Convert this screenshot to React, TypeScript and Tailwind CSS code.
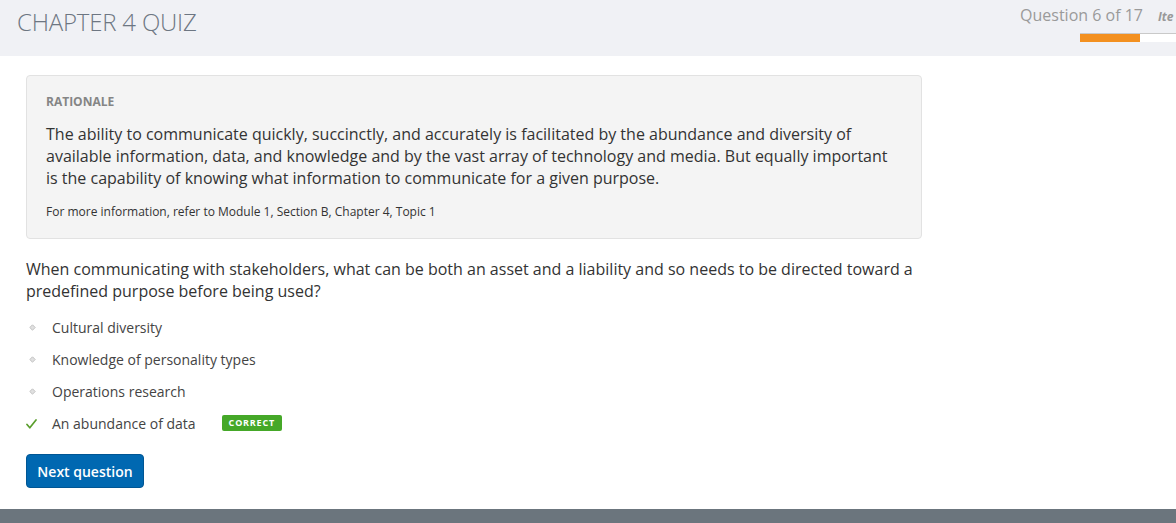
import React from 'react';

const options = [
  { label: 'Cultural diversity', correct: false },
  { label: 'Knowledge of personality types', correct: false },
  { label: 'Operations research', correct: false },
  { label: 'An abundance of data', correct: true },
];

const Diamond: React.FC = () => (
  <svg width="7" height="7" viewBox="0 0 7 7" className="block">
    <path d="M3.5 0.8 L6.2 3.5 L3.5 6.2 L0.8 3.5 Z" fill="#e0e0e0" stroke="#c2c2c2" strokeWidth="1" />
  </svg>
);

const Check: React.FC = () => (
  <svg width="11" height="10" viewBox="0 0 11 10" className="block">
    <path d="M1 5.5 L3.8 8.8 L10 1" fill="none" stroke="#5a9e2c" strokeWidth="1.7" strokeLinecap="round" strokeLinejoin="round" />
  </svg>
);

const App: React.FC = () => {
  return (
    <div className="w-[1176px] h-[523px] overflow-hidden bg-white flex flex-col" style={{ fontFamily: '"Open Sans", "Noto Sans", sans-serif' }}>
      {/* Header */}
      <div className="h-[56px] shrink-0 bg-[#f0f1f5] flex justify-between">
        <h1 className="pl-[17px] pt-[6px] text-[24px] leading-[32px] font-light text-[#6d7682] tracking-[-0.2px]">CHAPTER 4 QUIZ</h1>
        <div className="flex flex-col items-start pt-[4px] w-[96px] overflow-visible relative -ml-[100px]">
          <div className="absolute right-[33px] top-[4px] whitespace-nowrap text-[16px] leading-[22px] text-[#9a9a9a]">Question 6 of 17</div>
          <div className="absolute left-[78px] top-[8px] whitespace-nowrap text-[12px] font-bold italic text-[#999]">Ite</div>
          <div className="absolute left-[0px] top-[33px] w-[120px] h-[9px] bg-white border-t border-[#c9c9c9] flex">
            <div className="w-[60px] h-full bg-[#f39020]" />
          </div>
        </div>
      </div>

      {/* Content */}
      <div className="flex-1 pl-[26px] pt-[19px]">
        <div className="w-[896px]">
          <div className="bg-[#f4f4f4] border border-[#e2e2e2] rounded-[4px] px-[19px] pt-[17px] pb-[17px] h-[164px]">
            <div className="text-[12px] font-bold text-[#858585] leading-[18px]">RATIONALE</div>
            <p className="mt-[12px] text-[16px] leading-[22px] text-[#333]">
              The ability to communicate quickly, succinctly, and accurately is facilitated by the abundance and diversity of available information, data, and knowledge and by the vast array of technology and media. But equally important is the capability of knowing what information to communicate for a given purpose.
            </p>
            <p className="mt-[14px] text-[12px] leading-[18px] text-[#333]">For more information, refer to Module 1, Section B, Chapter 4, Topic 1</p>
          </div>

          <p className="mt-[19px] text-[16px] leading-[22px] text-[#333] pr-[4px]">
            When communicating with stakeholders, what can be both an asset and a liability and so needs to be directed toward a predefined purpose before being used?
          </p>

          <ul className="mt-[9px] flex flex-col">
            {options.map((o) => (
              <li key={o.label} className="h-[32px] flex items-center text-[14px] text-[#444]">
                <span className="w-[26px] flex justify-start">
                  {o.correct ? (
                    <span className="pt-[2px]"><Check /></span>
                  ) : (
                    <span className="pl-[3px]"><Diamond /></span>
                  )}
                </span>
                <span>{o.label}</span>
                {o.correct && (
                  <span className="ml-[26px] h-[16px] px-[7px] bg-[#45a828] rounded-[2px] text-white text-[9px] font-bold tracking-[0.8px] leading-[16px]">CORRECT</span>
                )}
              </li>
            ))}
          </ul>

          <button className="mt-[15px] h-[34px] w-[118px] bg-[#0068b1] border border-[#005694] rounded-[4px] text-white text-[14px] font-semibold">
            Next question
          </button>
        </div>
      </div>

      {/* Footer band */}
      <div className="h-[14px] shrink-0 bg-[#6b757d]" />
    </div>
  );
};

export default App;
